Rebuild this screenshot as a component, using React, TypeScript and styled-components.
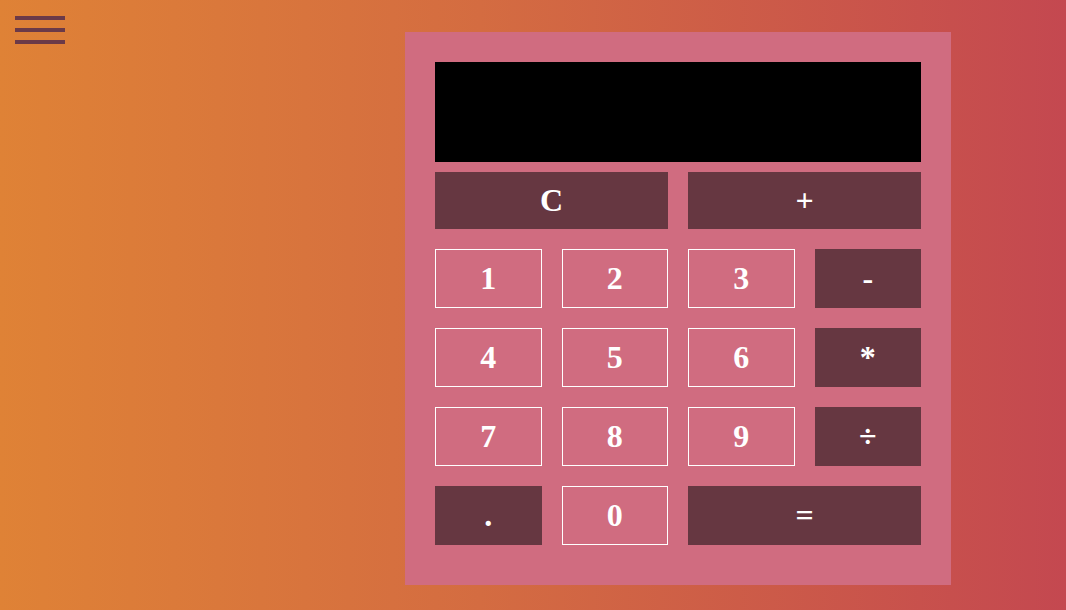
import React from "react";
import styled, { createGlobalStyle } from "styled-components";

const Global = createGlobalStyle`
  html, body { margin: 0; padding: 0; }
  body { font-family: "Liberation Serif", "Times New Roman", serif; }
`;

const Page = styled.div`
  width: 1066px;
  height: 610px;
  box-sizing: border-box;
  padding: 16px 15px;
  display: flex;
  align-items: flex-start;
  background: linear-gradient(to right, #df8236 0%, #d46c41 45%, #c44850 100%);
  overflow: hidden;
`;

const Menu = styled.div`
  width: 50px;
  display: flex;
  flex-direction: column;
  gap: 8px;
`;

const Bar = styled.span`
  display: block;
  height: 4px;
  background: #6b3a48;
`;

const Panel = styled.div`
  margin-left: 340px;
  margin-top: 16px;
  width: 546px;
  box-sizing: border-box;
  padding: 30px 30px 40px;
  background: #d06c80;
  display: flex;
  flex-direction: column;
  gap: 10px;
`;

const Display = styled.div`
  height: 100px;
  background: #000;
`;

const Keys = styled.div`
  display: grid;
  grid-template-columns: repeat(4, 1fr);
  grid-template-rows: 57px repeat(4, 59px);
  column-gap: 20px;
  row-gap: 20px;
`;

const Key = styled.button<{ $dark?: boolean; $span?: number }>`
  grid-column: span ${(p) => p.$span ?? 1};
  box-sizing: border-box;
  margin: 0;
  padding: 0;
  font-family: "Liberation Serif", "Times New Roman", serif;
  font-weight: bold;
  font-size: 32px;
  color: #fff;
  background: ${(p) => (p.$dark ? "#663741" : "transparent")};
  border: ${(p) => (p.$dark ? "none" : "1px solid #fff")};
  display: flex;
  align-items: center;
  justify-content: center;
  cursor: pointer;
`;

export default function App() {
  return (
    <>
      <Global />
      <Page>
        <Menu>
          <Bar />
          <Bar />
          <Bar />
        </Menu>
        <Panel>
          <Display />
          <Keys>
            <Key $dark $span={2}>C</Key>
            <Key $dark $span={2}>+</Key>
            <Key>1</Key>
            <Key>2</Key>
            <Key>3</Key>
            <Key $dark>-</Key>
            <Key>4</Key>
            <Key>5</Key>
            <Key>6</Key>
            <Key $dark>*</Key>
            <Key>7</Key>
            <Key>8</Key>
            <Key>9</Key>
            <Key $dark>÷</Key>
            <Key $dark>.</Key>
            <Key>0</Key>
            <Key $dark $span={2}>=</Key>
          </Keys>
        </Panel>
      </Page>
    </>
  );
}
